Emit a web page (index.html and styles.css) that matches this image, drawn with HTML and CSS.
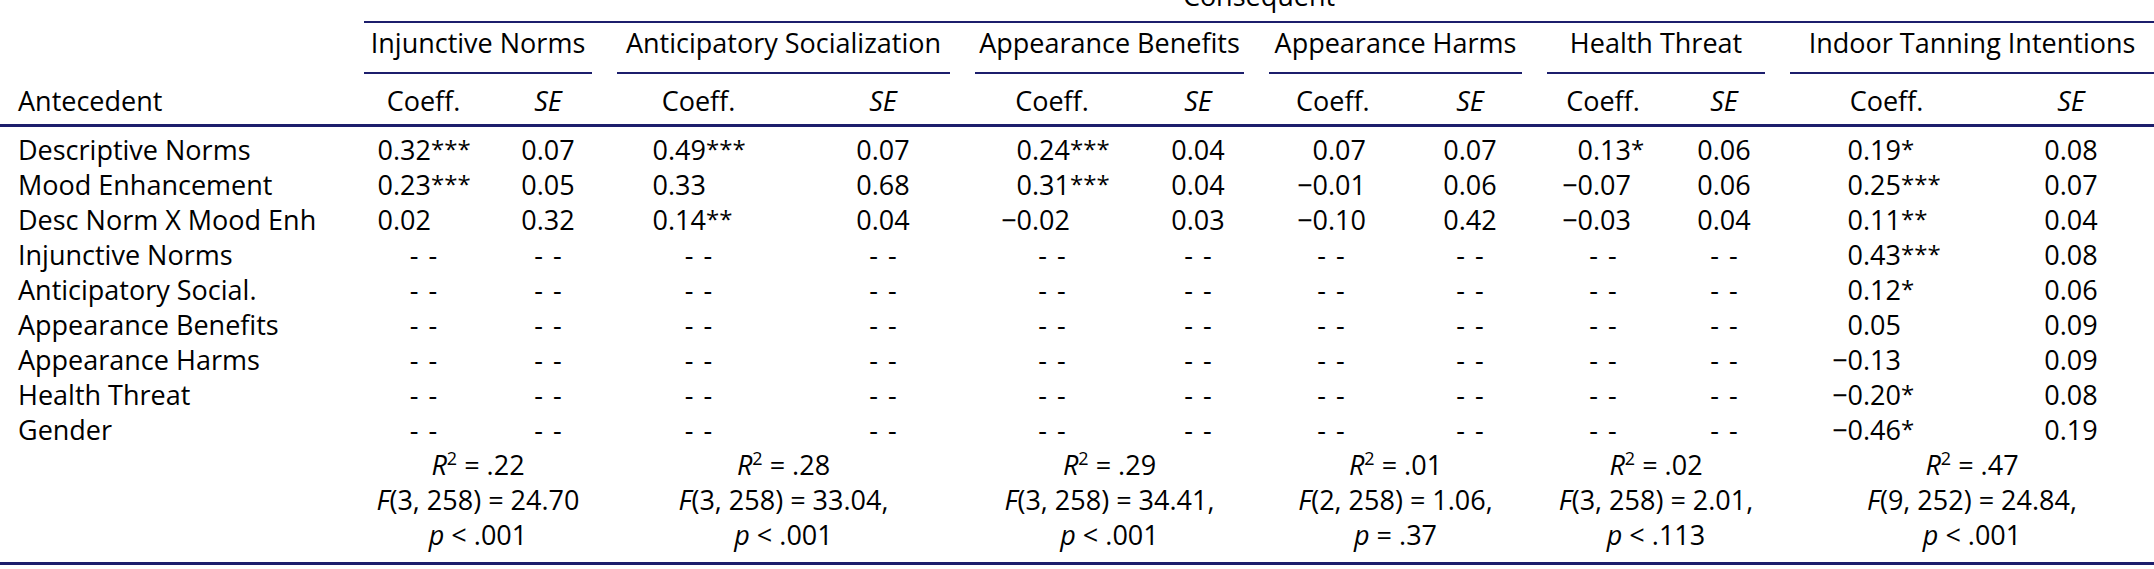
FILE: index.html
```html
<!DOCTYPE html>
<html lang="en">
<head>
<meta charset="utf-8">
<title>Consequent regression table</title>
<link rel="stylesheet" href="styles.css">
</head>
<body>
<table class="results">
  <colgroup>
    <col><col><col><col><col><col><col><col><col><col><col><col><col>
  </colgroup>
  <thead>
    <tr class="top">
      <th></th>
      <th colspan="12" class="consequent">Consequent</th>
    </tr>
    <tr class="groups">
      <th></th>
      <th colspan="2"><span class="grp">Injunctive Norms</span></th>
      <th colspan="2"><span class="grp">Anticipatory Socialization</span></th>
      <th colspan="2"><span class="grp">Appearance Benefits</span></th>
      <th colspan="2"><span class="grp">Appearance Harms</span></th>
      <th colspan="2"><span class="grp">Health Threat</span></th>
      <th colspan="2"><span class="grp">Indoor Tanning Intentions</span></th>
    </tr>
    <tr class="sub cols">
      <th class="label">Antecedent</th>
      <th><span class="v">Coeff.</span></th><th><span class="v"><i>SE</i></span></th>
      <th><span class="v">Coeff.</span></th><th><span class="v"><i>SE</i></span></th>
      <th><span class="v">Coeff.</span></th><th><span class="v"><i>SE</i></span></th>
      <th><span class="v">Coeff.</span></th><th><span class="v"><i>SE</i></span></th>
      <th><span class="v">Coeff.</span></th><th><span class="v"><i>SE</i></span></th>
      <th><span class="v">Coeff.</span></th><th><span class="v"><i>SE</i></span></th>
    </tr>
  </thead>
  <tbody>
    <tr class="cols">
      <td class="label">Descriptive Norms</td>
      <td><span class="v c"><span class="n">0.32</span><span class="s">***</span></span></td><td><span class="v">0.07</span></td>
      <td><span class="v c"><span class="n">0.49</span><span class="s">***</span></span></td><td><span class="v">0.07</span></td>
      <td><span class="v c"><span class="n">0.24</span><span class="s">***</span></span></td><td><span class="v">0.04</span></td>
      <td><span class="v c"><span class="n">0.07</span></span></td><td><span class="v">0.07</span></td>
      <td><span class="v c"><span class="n">0.13</span><span class="s">*</span></span></td><td><span class="v">0.06</span></td>
      <td><span class="v c"><span class="n">0.19</span><span class="s">*</span></span></td><td><span class="v">0.08</span></td>
    </tr>
    <tr class="cols">
      <td class="label">Mood Enhancement</td>
      <td><span class="v c"><span class="n">0.23</span><span class="s">***</span></span></td><td><span class="v">0.05</span></td>
      <td><span class="v c"><span class="n">0.33</span></span></td><td><span class="v">0.68</span></td>
      <td><span class="v c"><span class="n">0.31</span><span class="s">***</span></span></td><td><span class="v">0.04</span></td>
      <td><span class="v c"><span class="n">&minus;0.01</span></span></td><td><span class="v">0.06</span></td>
      <td><span class="v c"><span class="n">&minus;0.07</span></span></td><td><span class="v">0.06</span></td>
      <td><span class="v c"><span class="n">0.25</span><span class="s">***</span></span></td><td><span class="v">0.07</span></td>
    </tr>
    <tr class="cols">
      <td class="label">Desc Norm X Mood Enh</td>
      <td><span class="v c"><span class="n">0.02</span></span></td><td><span class="v">0.32</span></td>
      <td><span class="v c"><span class="n">0.14</span><span class="s">**</span></span></td><td><span class="v">0.04</span></td>
      <td><span class="v c"><span class="n">&minus;0.02</span></span></td><td><span class="v">0.03</span></td>
      <td><span class="v c"><span class="n">&minus;0.10</span></span></td><td><span class="v">0.42</span></td>
      <td><span class="v c"><span class="n">&minus;0.03</span></span></td><td><span class="v">0.04</span></td>
      <td><span class="v c"><span class="n">0.11</span><span class="s">**</span></span></td><td><span class="v">0.04</span></td>
    </tr>
    <tr class="cols">
      <td class="label">Injunctive Norms</td>
      <td><span class="v d">- -</span></td><td><span class="v d">- -</span></td>
      <td><span class="v d">- -</span></td><td><span class="v d">- -</span></td>
      <td><span class="v d">- -</span></td><td><span class="v d">- -</span></td>
      <td><span class="v d">- -</span></td><td><span class="v d">- -</span></td>
      <td><span class="v d">- -</span></td><td><span class="v d">- -</span></td>
      <td><span class="v c"><span class="n">0.43</span><span class="s">***</span></span></td><td><span class="v">0.08</span></td>
    </tr>
    <tr class="cols">
      <td class="label">Anticipatory Social.</td>
      <td><span class="v d">- -</span></td><td><span class="v d">- -</span></td>
      <td><span class="v d">- -</span></td><td><span class="v d">- -</span></td>
      <td><span class="v d">- -</span></td><td><span class="v d">- -</span></td>
      <td><span class="v d">- -</span></td><td><span class="v d">- -</span></td>
      <td><span class="v d">- -</span></td><td><span class="v d">- -</span></td>
      <td><span class="v c"><span class="n">0.12</span><span class="s">*</span></span></td><td><span class="v">0.06</span></td>
    </tr>
    <tr class="cols">
      <td class="label">Appearance Benefits</td>
      <td><span class="v d">- -</span></td><td><span class="v d">- -</span></td>
      <td><span class="v d">- -</span></td><td><span class="v d">- -</span></td>
      <td><span class="v d">- -</span></td><td><span class="v d">- -</span></td>
      <td><span class="v d">- -</span></td><td><span class="v d">- -</span></td>
      <td><span class="v d">- -</span></td><td><span class="v d">- -</span></td>
      <td><span class="v c"><span class="n">0.05</span></span></td><td><span class="v">0.09</span></td>
    </tr>
    <tr class="cols">
      <td class="label">Appearance Harms</td>
      <td><span class="v d">- -</span></td><td><span class="v d">- -</span></td>
      <td><span class="v d">- -</span></td><td><span class="v d">- -</span></td>
      <td><span class="v d">- -</span></td><td><span class="v d">- -</span></td>
      <td><span class="v d">- -</span></td><td><span class="v d">- -</span></td>
      <td><span class="v d">- -</span></td><td><span class="v d">- -</span></td>
      <td><span class="v c"><span class="n">&minus;0.13</span></span></td><td><span class="v">0.09</span></td>
    </tr>
    <tr class="cols">
      <td class="label">Health Threat</td>
      <td><span class="v d">- -</span></td><td><span class="v d">- -</span></td>
      <td><span class="v d">- -</span></td><td><span class="v d">- -</span></td>
      <td><span class="v d">- -</span></td><td><span class="v d">- -</span></td>
      <td><span class="v d">- -</span></td><td><span class="v d">- -</span></td>
      <td><span class="v d">- -</span></td><td><span class="v d">- -</span></td>
      <td><span class="v c"><span class="n">&minus;0.20</span><span class="s">*</span></span></td><td><span class="v">0.08</span></td>
    </tr>
    <tr class="cols">
      <td class="label">Gender</td>
      <td><span class="v d">- -</span></td><td><span class="v d">- -</span></td>
      <td><span class="v d">- -</span></td><td><span class="v d">- -</span></td>
      <td><span class="v d">- -</span></td><td><span class="v d">- -</span></td>
      <td><span class="v d">- -</span></td><td><span class="v d">- -</span></td>
      <td><span class="v d">- -</span></td><td><span class="v d">- -</span></td>
      <td><span class="v c"><span class="n">&minus;0.46</span><span class="s">*</span></span></td><td><span class="v">0.19</span></td>
    </tr>
    <tr class="stats">
      <td></td>
      <td colspan="2"><i>R</i><sup>2</sup> = .22</td>
      <td colspan="2"><i>R</i><sup>2</sup> = .28</td>
      <td colspan="2"><i>R</i><sup>2</sup> = .29</td>
      <td colspan="2"><i>R</i><sup>2</sup> = .01</td>
      <td colspan="2"><i>R</i><sup>2</sup> = .02</td>
      <td colspan="2"><i>R</i><sup>2</sup> = .47</td>
    </tr>
    <tr class="stats">
      <td></td>
      <td colspan="2"><i>F</i>(3, 258) = 24.70</td>
      <td colspan="2"><i>F</i>(3, 258) = 33.04,</td>
      <td colspan="2"><i>F</i>(3, 258) = 34.41,</td>
      <td colspan="2"><i>F</i>(2, 258) = 1.06,</td>
      <td colspan="2"><i>F</i>(3, 258) = 2.01,</td>
      <td colspan="2"><i>F</i>(9, 252) = 24.84,</td>
    </tr>
    <tr class="stats">
      <td></td>
      <td colspan="2"><i>p</i> &lt; .001</td>
      <td colspan="2"><i>p</i> &lt; .001</td>
      <td colspan="2"><i>p</i> &lt; .001</td>
      <td colspan="2"><i>p</i> = .37</td>
      <td colspan="2"><i>p</i> &lt; .113</td>
      <td colspan="2"><i>p</i> &lt; .001</td>
    </tr>
  </tbody>
</table>
</body>
</html>
```

FILE: styles.css
```css
:root {
  --rule: #1c1e6c;
}

html, body {
  margin: 0;
  padding: 0;
  background: #ffffff;
}

body {
  color: #000000;
  font-family: "Open Sans", "Noto Sans", sans-serif;
  font-size: 27px;
  line-height: 35px;
  overflow: hidden;
}

.results {
  border-collapse: separate;
  border-spacing: 0;
  table-layout: fixed;
  width: 2154px;
  margin-top: -22px;
}

.results col:nth-child(1) { width: 364px; }
.results col:nth-child(2) { width: 116px; }
.results col:nth-child(3) { width: 137px; }
.results col:nth-child(4) { width: 183px; }
.results col:nth-child(5) { width: 175px; }
.results col:nth-child(6) { width: 155px; }
.results col:nth-child(7) { width: 139px; }
.results col:nth-child(8) { width: 141px; }
.results col:nth-child(9) { width: 137px; }
.results col:nth-child(10) { width: 123px; }
.results col:nth-child(11) { width: 120px; }
.results col:nth-child(12) { width: 185px; }
.results col:nth-child(13) { width: 179px; }

.results th,
.results td {
  padding: 0;
  height: 35px;
  font-weight: normal;
  text-align: left;
  vertical-align: top;
  white-space: nowrap;
  line-height: 35px;
}

/* Header: "Consequent" spanner */
.results .consequent {
  text-align: center;
  padding-bottom: 8px;
  border-bottom: 2px solid var(--rule);
}

/* Header: group names with their underlines */
.groups th {
  padding-top: 2px;
}

.grp {
  display: block;
  text-align: center;
  padding-bottom: 12px;
  border-bottom: 2px solid var(--rule);
  margin-right: 25px;
}

.groups th:last-child .grp {
  margin-right: 0;
}

/* Header: Coeff. / SE row */
.sub th {
  padding-top: 9px;
  padding-bottom: 6px;
  border-bottom: 3px solid var(--rule);
}

.results .label {
  padding-left: 18px;
}

/* Body */
tbody tr:first-child td {
  padding-top: 5px;
}

tbody tr:last-child td {
  padding-bottom: 10px;
  border-bottom: 3px solid var(--rule);
}

/* Value boxes */
.v {
  display: inline-block;
  width: var(--w);
  height: 35px;
  text-align: center;
  white-space: nowrap;
  vertical-align: top;
}

.v.c {
  text-align: left;
}

.n {
  display: inline-block;
  width: var(--n);
  text-align: right;
}

.s {
  font-size: 24px;
  line-height: 0;
  vertical-align: 2px;
}

.d {
  word-spacing: 3px;
}

/* Column placement */
.cols > :nth-child(2)  { padding-left: 12px; --w: 95px;  --n: 55px; }
.cols > :nth-child(3)  { padding-left: 40px; --w: 56px; }
.cols > :nth-child(4)  { padding-left: 34px; --w: 95px;  --n: 55px; }
.cols > :nth-child(5)  { padding-left: 55px; --w: 56px; }
.cols > :nth-child(6)  { padding-left: 25px; --w: 104px; --n: 70px; }
.cols > :nth-child(7)  { padding-left: 40px; --w: 56px; }
.cols > :nth-child(8)  { padding-left: 27px; --w: 70px;  --n: 70px; }
.cols > :nth-child(9)  { padding-left: 32px; --w: 56px; }
.cols > :nth-child(10) { padding-left: 14px; --w: 84px;  --n: 70px; }
.cols > :nth-child(11) { padding-left: 26px; --w: 56px; }
.cols > :nth-child(12) { padding-left: 41px; --w: 111px; --n: 70px; }
.cols > :nth-child(13) { padding-left: 68px; --w: 56px; }

/* Model statistics */
.stats td {
  text-align: center;
  padding-right: 25px;
}

.stats td:first-child,
.stats td:last-child {
  padding-right: 0;
}

.stats sup {
  font-size: 18px;
  line-height: 0;
  vertical-align: 10px;
}
```
